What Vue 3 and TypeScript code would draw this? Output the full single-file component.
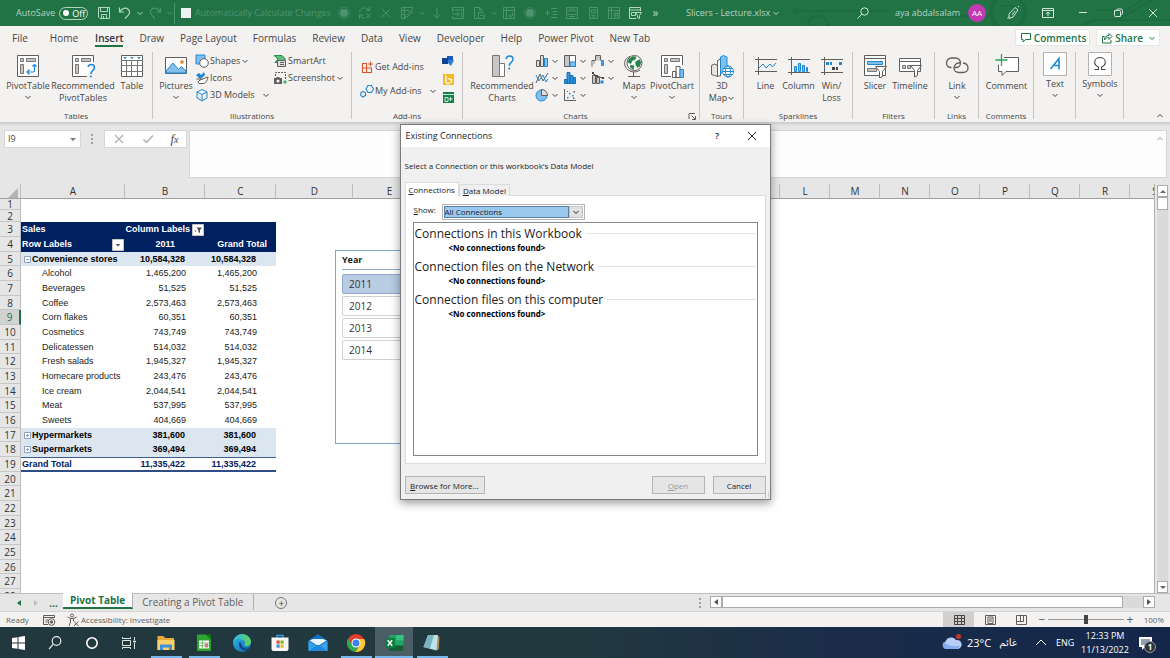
<script setup lang="ts">
import { h, ref } from 'vue'

interface IconProps { name: string; size?: number }
const Icon = (props: IconProps) => {
  const s = props.size ?? 14
  return h('svg', { width: s, height: s, viewBox: `0 0 ${s} ${s}`, 'aria-hidden': 'true' }, [h('use', { href: `#i-${props.name}` })])
}
Icon.props = ['name', 'size']

const qat = [
  { icon: 'dot', label: 'Record' }, { icon: 'refresh', label: 'Refresh' }, { icon: 'cross', label: 'Cancel' },
  { icon: 'edit', label: 'Edit', menu: true }, { icon: 'down', label: 'Drill down' }, { icon: 'import', label: 'Import' },
  { icon: 'paste', label: 'Paste', menu: true }, { icon: 'swap', label: 'Move' }, { icon: 'dot', label: 'Stop' },
  { icon: 'indent', label: 'Indent' }, { icon: 'rows', label: 'Rows' }, { icon: 'page', label: 'Page' },
  { icon: 'hash', label: 'Number' }, { icon: 'slicerq', label: 'Slicer', on: true },
]
const tabs = ['File', 'Home', 'Insert', 'Draw', 'Page Layout', 'Formulas', 'Review', 'Data', 'View', 'Developer', 'Help', 'Power Pivot', 'New Tab']

interface Big { icon: string; lines: string[]; menu?: boolean; inlineMenu?: boolean; cls: string }
const tables: Big[] = [
  { icon: 'pivot', lines: ['PivotTable'], menu: true, cls: 'w44' },
  { icon: 'recpivot', lines: ['Recommended', 'PivotTables'], cls: 'w66' },
  { icon: 'table', lines: ['Table'], cls: 'w32' },
]
const charts = ['column', 'tree', 'waterfall', 'line', 'histo', 'combo', 'pie', 'scatter']
const mapCharts: Big[] = [
  { icon: 'maps', lines: ['Maps'], menu: true, cls: 'w32' },
  { icon: 'pivotchart', lines: ['PivotChart'], menu: true, cls: 'w44' },
]
const tailGroups: { name: string; cls: string; items: Big[] }[] = [
  { name: 'Tours', cls: 'g-tours', items: [{ icon: 'map3d', lines: ['3D', 'Map'], inlineMenu: true, cls: 'w32' }] },
  { name: 'Sparklines', cls: 'g-spark', items: [
    { icon: 'spline', lines: ['Line'], cls: 'w32' }, { icon: 'spcol', lines: ['Column'], cls: 'w34' }, { icon: 'spwin', lines: ['Win/', 'Loss'], cls: 'w32' }] },
  { name: 'Filters', cls: 'g-filters', items: [
    { icon: 'slicer', lines: ['Slicer'], cls: 'w32' }, { icon: 'timeline', lines: ['Timeline'], cls: 'w38' }] },
  { name: 'Links', cls: 'g-links', items: [{ icon: 'link', lines: ['Link'], menu: true, cls: 'w38' }] },
  { name: 'Comments', cls: 'g-comments', items: [{ icon: 'comment', lines: ['Comment'], cls: 'w44' }] },
  { name: '', cls: 'g-text', items: [{ icon: 'text', lines: ['Text'], menu: true, cls: 'w38' }] },
  { name: '', cls: 'g-symbols', items: [{ icon: 'omega', lines: ['Symbols'], menu: true, cls: 'w38' }] },
]

const cols = 'ABCDEFGHIJKLMNOPQRS'.split('')
interface Row { n: number; kind: string; cells: string[] }
const data: Record<number, [string, string, string, string]> = {
  3: ['head', 'Sales', 'Column Labels', ''],
  4: ['head', 'Row Labels', '2011', 'Grand Total'],
  5: ['sub', 'Convenience stores', '10,584,328', '10,584,328'],
  6: ['item', 'Alcohol', '1,465,200', '1,465,200'],
  7: ['item', 'Beverages', '51,525', '51,525'],
  8: ['item', 'Coffee', '2,573,463', '2,573,463'],
  9: ['item', 'Corn flakes', '60,351', '60,351'],
  10: ['item', 'Cosmetics', '743,749', '743,749'],
  11: ['item', 'Delicatessen', '514,032', '514,032'],
  12: ['item', 'Fresh salads', '1,945,327', '1,945,327'],
  13: ['item', 'Homecare products', '243,476', '243,476'],
  14: ['item', 'Ice cream', '2,044,541', '2,044,541'],
  15: ['item', 'Meat', '537,995', '537,995'],
  16: ['item', 'Sweets', '404,669', '404,669'],
  17: ['sub', 'Hypermarkets', '381,600', '381,600'],
  18: ['sub', 'Supermarkets', '369,494', '369,494'],
  19: ['total', 'Grand Total', '11,335,422', '11,335,422'],
}
const rows: Row[] = Array.from({ length: 28 }, (_, i) => {
  const d = data[i + 1]
  return { n: i + 1, kind: d ? d[0] : 'blank', cells: d ? [d[1], d[2], d[3]] : ['', '', ''] }
})
const years = ['2011', '2012', '2013', '2014']
const year = ref('2011')
const show = ref('All Connections')
const zoom = ref(50)
const connectionGroups = ['Connections in this Workbook', 'Connection files on the Network', 'Connection files on this computer']
const apps = [
  { icon: 'win', label: 'Start', cls: 't-start' }, { icon: 'tsearch', label: 'Search', cls: 't-sys' },
  { icon: 'cortana', label: 'Cortana', cls: 't-sys' }, { icon: 'taskview', label: 'Task View', cls: 't-sys' },
  { icon: 'folder', label: 'File Explorer', cls: 't-app open' }, { icon: 'calc', label: 'Calc', cls: 't-app open' },
  { icon: 'edge', label: 'Edge', cls: 't-app' }, { icon: 'store', label: 'Store', cls: 't-app' },
  { icon: 'mail', label: 'Mail', cls: 't-app' }, { icon: 'chrome', label: 'Chrome', cls: 't-app open' },
  { icon: 'excel', label: 'Excel', cls: 't-app open current' }, { icon: 'notepad', label: 'Notepad', cls: 't-app open' },
]
</script>

<template>
  <div class="app">
    <svg class="sprite" aria-hidden="true">
      <defs>
        <linearGradient id="edgeg" x1="0" y1="0" x2="1" y2="1"><stop offset="0" stop-color="#35c1f1" /><stop offset="1" stop-color="#0c59a4" /></linearGradient>
        <linearGradient id="edgeh" x1="0" y1="0" x2="1" y2="0"><stop offset="0" stop-color="#2fb5e8" /><stop offset="1" stop-color="#5fd45a" /></linearGradient>
        <g id="i-chev" fill="none" stroke="currentColor" stroke-width="1"><path d="M1.500 3l2.500 2.500L6.500 3" /></g>
        <!-- quick access -->
        <g id="i-save" fill="none" stroke="currentColor"><path d="M1.500 1.500h11v11h-9.500l-1.500-1.500zM3.500 1.500v4h7v-4M4.500 12.500v-4h5v4M6.500 10v2" /></g>
        <g id="i-undo" fill="none" stroke="currentColor" stroke-width="1.200"><path d="M1.500 1.500v4.500h4.500M1.800 5.800C4 2 8 1.200 10.300 3.500c2.200 2.300 1.200 4.500-.5 6.200L7 12.500" /></g>
        <g id="i-redo" fill="none" stroke="currentColor" stroke-width="1.200"><path d="M12.500 1.500v4.500H8M12.200 5.800C10 2 6 1.200 3.700 3.500 1.500 5.800 2.500 8 4.200 9.700L7 12.500" /></g>
        <g id="i-dot"><circle cx="7" cy="7" r="5.500" fill="none" stroke="currentColor" opacity=".6" /><circle cx="7" cy="7" r="4" fill="currentColor" /></g>
        <g id="i-refresh" fill="none" stroke="currentColor"><path d="M1.500 6C2.500 2.500 6 1 9 2.500l2.500 2M11.500 1v3.500H8M1.500 12.500V9H5M1.800 9.300C3 11.500 5 12.500 7 12M8.500 7.500l4 4.500M12.500 7.500l-4 4.500" /></g>
        <g id="i-cross" fill="none" stroke="currentColor"><path d="M3 3l8 8M11 3l-8 8" /></g>
        <g id="i-edit" fill="none" stroke="currentColor"><path d="M12.500 3.500v-2h-11v11h4M1.500 4.500h8M4.500 1.500v11M1.500 8.500h3M12.500 5.500l-5 5-2 .8.800-2 5-5z" /></g>
        <g id="i-down" fill="none" stroke="currentColor"><path d="M7 2v10M3.500 8.500L7 12l3.500-3.500" /></g>
        <g id="i-import" fill="none" stroke="currentColor"><path d="M1.500 6V1.500h11v11h-11V10M1.500 4h11M1.500 8H8M5.500 5.500L8 8l-2.500 2.500M10.500 6v5" /></g>
        <g id="i-paste" fill="none" stroke="currentColor"><path d="M6 12.500H2.500v-11h5L10 4v2M7.500 1.500V4H10M6.500 6.500h4l2 2v4h-6zM8 9.500h3" /></g>
        <g id="i-swap" fill="none" stroke="currentColor"><path d="M1.500 1.500h11v11h-11zM1.500 4.500h11M4.500 1.500v11M7 10h3.500V6.500M8.500 8.300L7 10l1.500 1.500" /></g>
        <g id="i-indent" fill="none" stroke="currentColor"><path d="M7 2.500h6M8.500 5.500H13M8.500 8.500H13M7 11.500h6M1 7h5M3.500 4.500v5" /></g>
        <g id="i-rows" fill="none" stroke="currentColor"><path d="M1.500 1.500h11v11h-11zM1.500 5h11M1.500 8.500h11M4 3.200h6M4 10.500h6" /></g>
        <g id="i-page" fill="none" stroke="currentColor"><path d="M3.500 1.500h8v11h-8zM5.500 4h4v3h-4zM5.500 9.500h4M5.500 11h4" /></g>
        <g id="i-hash" fill="none" stroke="currentColor"><path d="M1.500 1.500h11v11h-11zM1.500 4.500h11M4.500 1.500v11M8 5.500v6M10.500 5.500v6M6.500 7.500h5.500M6.500 9.800h5.500" /></g>
        <g id="i-slicerq" fill="none" stroke="currentColor"><path d="M12.500 5v-3.500h-11v11h7M1.500 4h11M3.500 6.500h4v3h-4zM7.500 6.500h6l-2 3v3l-2-1v-2z" /></g>
        <g id="i-search" fill="none" stroke="currentColor"><circle cx="8.500" cy="5.500" r="3.700" /><path d="M5.800 8.300L1.500 12.500" /></g>
        <g id="i-pen" fill="none" stroke="currentColor"><path d="M3 8l6-6.500 3 2.500-5 7-4 1.500zM9 5l-3 4M1.500 12.500l1.500-2M12 1l1-1" /></g>
        <g id="i-ribbonopt" fill="none" stroke="currentColor"><path d="M1.500 2.500h11v9h-11zM1.500 4.500h11M7 10V6M5 8l2-2 2 2" /></g>
        <g id="i-min" fill="none" stroke="currentColor"><path d="M3 6.500h8" /></g>
        <g id="i-restore" fill="none" stroke="currentColor"><path d="M3.500 4.500h5q1 0 1 1v5h-5q-1 0-1-1zM5.500 4.500q0-1.500 1-1.500h3.500q1.500 0 1.500 1.500v3q0 1-2 1" /></g>
        <g id="i-bubble" fill="none" stroke="currentColor"><path d="M2.500 2.500h9v6h-5l-2.500 2.500v-2.500h-1.500z" /></g>
        <g id="i-share" fill="none" stroke="currentColor"><path d="M4.500 5.500h-2v6.500h8.500v-3M4.500 9c0-3 1.500-4.500 4.500-4.500V2.500l3 3-3 3V6.500C7 6.500 5.500 7 4.500 9z" /></g>
        <!-- large ribbon icons -->
        <g id="i-pivot"><path d="M1.500 1.500h21v21h-21z" fill="#fff" stroke="#605e5c" /><path d="M4.500 4.500h3v3h-3zM10.500 4.500h9v3h-9zM4.500 10.500h3v9h-3z" fill="#c8c6c4" stroke="#797775" /><path d="M18.500 10.500v6q0 1.500-1.500 1.500h-5.500M16.500 12.500l2-2 2 2M13.500 15.500L11 18l2.500 2.500" fill="none" stroke="#1e88d2" stroke-width="1.200" /></g>
        <g id="i-recpivot"><path d="M22.500 8V1.500h-21v21H16" fill="#fff" stroke="#605e5c" /><path d="M4.500 4.500h3v3h-3zM10.500 4.500h9v3h-9zM4.500 10.500h3v9h-3z" fill="#c8c6c4" stroke="#797775" /><path d="M17 13c.5-2 2-2.500 3.500-2.500s3 1 3 3c0 3-3.500 3-3.500 6.500" fill="none" stroke="#1e88d2" stroke-width="1.600" /><circle cx="20" cy="22.500" r="1.100" fill="#1e88d2" /></g>
        <g id="i-table"><path d="M1.500 1.500h21v21h-21z" fill="#fff" stroke="#605e5c" /><path d="M1.500 6.500h21M1.500 11.500h21M1.500 17.500h21M6.500 6.500v16M11.500 6.500v16M17.500 6.500v16" fill="none" stroke="#797775" /><path d="M3 3h4l-2 2zM10 3h4l-2 2zM17 3h4l-2 2z" fill="#1e88d2" /></g>
        <g id="i-pictures"><path d="M1.500 3.500h21v16h-21z" fill="#fff" stroke="#605e5c" /><path d="M2 17l7-8 5.500 6.500 3-3L22 17v2H2z" fill="#83beec" stroke="#1e88d2" /><circle cx="18" cy="8" r="1.700" fill="#e07b2a" /></g>
        <g id="i-reccharts"><path d="M2.500 1.500h7v21h-7z" fill="#c8c6c4" stroke="#797775" /><path d="M9.500 9.500h5v13h-5z" fill="#fff" stroke="#797775" /><path d="M16 5c.5-2 2-3 3.500-3s3.500 1 3.500 3.300c0 3.200-3.700 3-3.700 6.500" fill="none" stroke="#1e88d2" stroke-width="1.500" /><circle cx="19.300" cy="14.500" r="1.100" fill="#1e88d2" /></g>
        <g id="i-maps"><path d="M8 2.500C3 4 1.500 9 3.500 13c2.500 5 10 6.500 14.500 3" fill="none" stroke="#605e5c" /><circle cx="12.500" cy="9" r="7.500" fill="#fff" stroke="#605e5c" /><path d="M7 5l4-2.500 3 .5-1 2.500-3 1-1 3-3-1zM13.500 8l4-2.500 1.500 3-1.500 4-2 1-1.500-2.500zM8.500 11l3.500 1-.5 3.500-3-2z" fill="#1f8a4c" stroke="#156b39" stroke-width=".5" /><path d="M11.500 18v4M6 22.500h12" stroke="#605e5c" /></g>
        <g id="i-pivotchart"><path d="M22.500 11V1.500h-21v21H11" fill="#fff" stroke="#605e5c" /><path d="M4.500 4.500h3v3h-3zM10.500 4.500h9v3h-9zM4.500 10.500h3v9h-3z" fill="#c8c6c4" stroke="#797775" /><path d="M12.500 17.500h3.500v6h-3.500zM16 12.500h4v11h-4z" fill="#fff" stroke="#605e5c" /><path d="M20 15.500h3.500v8H20z" fill="#83beec" stroke="#1e88d2" /></g>
        <g id="i-map3d"><path d="M1.500 11.500l3-1.500 3 1.500v11l-3-1-3-1z" fill="#e8e6e4" stroke="#605e5c" /><path d="M7.500 6.500l3-1.500v17h-3z" fill="#fff" stroke="#605e5c" /><path d="M10.500 3l3-1.500 3.500 1.500v11l-6.500 6z" fill="#83beec" stroke="#1e88d2" /><circle cx="18" cy="17.500" r="5.500" fill="#fff" stroke="#1e88d2" /><ellipse cx="18" cy="17.500" rx="2.500" ry="5.500" fill="none" stroke="#1e88d2" /><path d="M12.500 17.500h11M13.500 14.500h9M13.500 20.500h9" stroke="#1e88d2" /></g>
        <g id="i-spline"><path d="M1 5.500h22M1 17.500h22M4.500 3v18" stroke="#605e5c" fill="none" /><path d="M5 14l4-4 3 4 4-4 2.500 3L22 9" fill="none" stroke="#1e88d2" /></g>
        <g id="i-spcol"><path d="M1 5.500h22M1 18.500h22M4.500 3v18" stroke="#605e5c" fill="none" /><path d="M7.500 12.500h2v5h-2zM11.500 9.500h2v8h-2zM15.500 11.500h2v6h-2zM19.500 13.500h1v4h-1z" fill="#83beec" stroke="#1e88d2" /></g>
        <g id="i-spwin"><path d="M1 5.500h22M1 18.500h22M4.500 3v18" stroke="#605e5c" fill="none" /><path d="M6 8h3v3H6zM10 8h2v3h-2zM19 8h3v3h-3z" fill="#1e88d2" /><path d="M12 13h3v3h-3zM16 13h2v3h-2z" fill="#444" /></g>
        <g id="i-slicer"><path d="M1.500 1.500h21v20h-21z" fill="#fff" stroke="#605e5c" /><path d="M1.500 4.500h21" stroke="#605e5c" /><path d="M4.500 7.500h15v3h-15z" fill="#83beec" stroke="#1e88d2" /><path d="M4.500 14.500h9v3h-9z" fill="#c8c6c4" stroke="#797775" /><path d="M12.500 12.500h11l-4 5v5l-3 1.500v-6.500z" fill="#fff" stroke="#605e5c" /></g>
        <g id="i-timeline"><path d="M1.500 4.500h21v13h-21z" fill="#fff" stroke="#605e5c" /><path d="M1.500 7.500h21" stroke="#605e5c" /><path d="M4.500 11.500h3v3h-3zM9.500 11.500h3v3h-3z" fill="#c8c6c4" stroke="#797775" /><path d="M12.500 11.500h11l-4 5v5l-3 1.500v-6.500z" fill="#fff" stroke="#605e5c" /></g>
        <g id="i-link" fill="none" stroke="#605e5c" stroke-width="1.300"><path d="M6.500 13.500C3 13.500 1.500 11.500 1.500 9S3.500 4 6.500 4h4C13.500 4 15.500 6.500 15.500 9s-2 4.500-4.500 4.500H9.500" /><path d="M18 9c3 .3 5 2.500 5 5s-2 4.500-5 4.500h-4c-3 0-5-2-5-4.500s2-5 4.500-5h2" /></g>
        <g id="i-comment"><path d="M9 3.500h14.500v14H11l-4 4v-4H3.500v-7" fill="#fff" stroke="#605e5c" /><path d="M6.500 0v12M.5 6h12" stroke="#2ba359" stroke-width="1.300" /></g>
        <g id="i-text"><path d="M.5.500h23v23H.5z" fill="#fff" stroke="#b3b0ad" /><path d="M7.500 17l8.500-10.500v11M10.500 13.500H16" fill="none" stroke="#1e88d2" stroke-width="1.600" /></g>
        <g id="i-omega"><path d="M.5.500h23v23H.5z" fill="#fff" stroke="#b3b0ad" /><path d="M6.500 17.500h4v-2.500c-2.500-1-3.800-2.500-3.800-4.800 0-2.800 2.300-4.700 5.300-4.700s5.300 1.900 5.300 4.700c0 2.300-1.300 3.800-3.800 4.800v2.500h4" fill="none" stroke="#484644" stroke-width="1.100" /></g>
        <!-- small ribbon icons -->
        <g id="i-shapes"><path d="M1 1h9v9H1z" fill="#83beec" stroke="#1e88d2" /><circle cx="9" cy="9" r="4.300" fill="#fff" stroke="#605e5c" /></g>
        <g id="i-icons"><path d="M1 4l3-2 2 2 3-3 1 3-2 2-3 2z" fill="#1e88d2" /><path d="M1.500 8h6M3 11l2-2 8-3q-1 6-5 6.500H4z" fill="#fff" stroke="#605e5c" /></g>
        <g id="i-models" fill="none" stroke="#1e88d2"><path d="M7 1.500l5 2.500v6l-5 3-5-3V4zM2 4l5 2.500L12 4M7 6.500V13" /></g>
        <g id="i-smartart"><path d="M1 1.500h8l3.500 3.500L9 8.500H2l3-3.500z" fill="#5fba7d" stroke="#2b8a4c" /><path d="M4.500 6.500h8v6h-8z" fill="#e1dfdd" stroke="#605e5c" /><path d="M7 8.500h4M7 10.500h4" stroke="#605e5c" /></g>
        <g id="i-screenshot"><path d="M2.500 5V1.500h10V8" fill="none" stroke="#605e5c" stroke-dasharray="2 1" /><path d="M1 7h2l1-1h2l1 1h2v6H1z" fill="#605e5c" /><circle cx="5" cy="10" r="1.500" fill="#fff" /><path d="M12 9v4M10 11h4" stroke="#2ba359" /></g>
        <g id="i-getadd" fill="none" stroke="#d8542b" stroke-width="1.100"><path d="M2.500 3.500h4v9h-4zM2.500 8h9v4.500h-5M10.500 1.500v5M8 4h5" /></g>
        <g id="i-myadd" fill="none" stroke="#1e88d2" stroke-width="1.100"><path d="M8 1.500h3.500l2 3.500-2 3.500H8L6 5zM3 7.500l2.500 1.300v2.700L3 13 .8 11.500V8.800z" /></g>
        <g id="i-visio"><path d="M6 2h6v5H6z" fill="#1b5bb5" /><path d="M1 4h6v6H1z" fill="#0f4396" /><path d="M7 6h6l-3 6-3-3z" fill="#2f7bd8" /></g>
        <g id="i-bing"><path d="M2 2h11v11H2z" fill="#f7b924" /><path d="M5 3.500v7l2 1.200 3.500-2V7.800L7 6.500" fill="none" stroke="#fff" stroke-width="1.300" /></g>
        <g id="i-people"><path d="M2 2h11v11H2z" fill="#15804a" /><path d="M2 4.500h11M4 7.500h3v4H4zM9.500 7v4M7.500 9h4" stroke="#cdebd9" fill="none" /></g>
        <g id="i-column"><path d="M1.500 6.500h3v6h-3zM5.500 1.500h3v11h-3z" fill="#e1dfdd" stroke="#605e5c" /><path d="M9.500 4.500h3v8h-3z" fill="#83beec" stroke="#1e88d2" /></g>
        <g id="i-tree"><path d="M1.500 1.500h11v11h-11z" fill="#fff" stroke="#605e5c" /><path d="M2 2h4.500v10H2z" fill="#c8c6c4" /><path d="M6.500 1.500v11" stroke="#605e5c" /><path d="M7 8h5.500v4.500H7z" fill="#83beec" stroke="#1e88d2" /></g>
        <g id="i-waterfall"><path d="M1 12.500V6.500h3.500V1.500h5v5" fill="none" stroke="#605e5c" /><path d="M5 2h4v4.500H5zM1.500 7H4v3H1.500z" fill="#c8c6c4" /><path d="M10 6h3v6h-3z" fill="#3a96dd" /></g>
        <g id="i-line"><path d="M1 12l4-9 3 7 5-8" fill="none" stroke="#605e5c" /><path d="M1 4l3 6 4-6 3 7 2-3" fill="none" stroke="#1e88d2" /></g>
        <g id="i-histo"><path d="M1.500 8.500h2.500v4H1.500zM4 1.500h3v11H4zM7 4.500h3v8H7zM10 6.500h2.500v6H10z" fill="#3a96dd" stroke="#1570b8" /></g>
        <g id="i-combo"><path d="M1.500 4.500h3v8h-3zM5.500 6.500h3v6h-3z" fill="#c8c6c4" stroke="#605e5c" /><path d="M9.500 9.500h3v3h-3z" fill="#1e88d2" /><path d="M1 2l5 3 6.500 2.500" fill="none" stroke="#484644" /><path d="M1 1h2v2H1zM5 4h2v2H5zM11 6h2v2h-2z" fill="#484644" /></g>
        <g id="i-pie"><circle cx="6.500" cy="7.500" r="5.500" fill="#83beec" stroke="#1e88d2" /><path d="M6.500 7.500V1.500a6 6 0 0 1 6 6z" fill="#e1dfdd" stroke="#605e5c" /></g>
        <g id="i-scatter"><path d="M1.500 1v11.500H13" fill="none" stroke="#605e5c" /><path d="M4 9h1.500v1.500H4zM6 5h1.500v1.500H6zM9 7h1.500v1.500H9z" fill="#1e88d2" /><path d="M10.500 3H12v1.500h-1.500zM10 9.500h1.500V11H10zM4 3h1v1H4z" fill="#605e5c" /></g>
        <g id="i-launch" fill="none" stroke="#605e5c"><path d="M1 7V1.500h6M3.500 3.500L7 7M7.500 4v3.500H4" /></g>
        <!-- sheet and status -->
        <g id="i-fcross" fill="none" stroke="#b3b0ad" stroke-width="1.200"><path d="M3 3l8 8M11 3l-8 8" /></g>
        <g id="i-fcheck" fill="none" stroke="#b3b0ad" stroke-width="1.500"><path d="M2.500 7.500L5.500 10.500 12 3.500" /></g>
        <g id="i-filter"><path d="M.5.500h11v11h-11z" fill="#fff" stroke="#c8c6c4" /><path d="M4.500 3.500h5.500L8 6v3L6.500 8V6z" fill="#444" /><path d="M2.500 6.500h2l-1 1.500z" fill="#444" /></g>
        <g id="i-drop"><path d="M.5.500h11v11h-11z" fill="#fff" stroke="#c8c6c4" /><path d="M3.500 5h5L6 7.500z" fill="#555" /></g>
        <g id="i-minus" fill="#fff" stroke="#8aa4c4"><path d="M.5.500h6v6h-6zM2 3.500h3" /></g>
        <g id="i-plus" fill="#fff" stroke="#8aa4c4"><path d="M.5.500h6v6h-6zM2 3.500h3M3.500 2v3" /></g>
        <g id="i-macro" fill="none" stroke="#605e5c"><path d="M12.500 5V2.500h-11v9H6M1.500 4.500h11M3.500 7h3M3.500 9h2" /><circle cx="9.500" cy="9" r="3.300" /><circle cx="9.500" cy="9" r="1.200" fill="#605e5c" /></g>
        <g id="i-access" fill="none" stroke="#605e5c"><circle cx="6" cy="2.500" r="1.500" /><path d="M1.500 4l3 1.500h3l3-1.500M4.500 5.500V9L3 13M7.500 5.500v2.500M8 8.500l4.500 4.500M12.500 8.500L8 13" /></g>
        <g id="i-vnormal" fill="none" stroke="#484644"><path d="M2.500 2.500h10v9h-10zM2.500 5.500h10M2.500 8.500h10M5.500 2.500v9M9.500 2.500v9" /></g>
        <g id="i-vpage" fill="none" stroke="#605e5c"><path d="M2.500 2.500h10v9h-10zM5 4h5v6.500H5zM6 6h3M6 8h3" /></g>
        <g id="i-vbreak" fill="none" stroke="#605e5c"><path d="M2.500 2.500h10v9h-10zM2.500 8.500h7v-6M6.500 2.500v6" /></g>
        <!-- taskbar -->
        <g id="i-win" fill="#fff"><path d="M4 5l5.500-.8V9.500H4zM10.500 4l6.500-1v6.500h-6.500zM4 10.500h5.500v5.300L4 15zM10.500 10.500H17V17l-6.500-1z" /></g>
        <g id="i-tsearch" fill="none" stroke="#e6eaec" stroke-width="1.200"><circle cx="11.500" cy="8" r="4.300" /><path d="M8.300 11.200L4 16" /></g>
        <g id="i-cortana"><circle cx="10" cy="10" r="5.200" fill="none" stroke="#fff" stroke-width="1.600" /></g>
        <g id="i-taskview" fill="none" stroke="#dfe4e6"><path d="M3.500 4v1.500h8V4M3.500 7.500h8v5h-8zM3.500 16v-1.500h8V16M15.500 4v3M15.500 10v6" /><path d="M14.500 8h2v1h-2z" fill="#fff" /></g>
        <g id="i-folder"><path d="M1.500 3h6l1.500 2h9v12h-16.500z" fill="#e8a93a" /><path d="M1.500 7h17v10h-17z" fill="#fbd06b" /><path d="M4 17v-5.500h12V17h-3v-2.500H7V17z" fill="#3f8fd6" /></g>
        <g id="i-calc"><path d="M3 1.500h9l5 5V18H3z" fill="#2ea52e" /><path d="M12 1.500l5 5v-5z" fill="#0d7a12" /><path d="M5 7.500h10v8H5z" fill="#fff" /><path d="M5 10h10M5 12.700h10M8.300 7.500v8" stroke="#6dbb6d" /><path d="M11 10.500h3v4h-3z" fill="#d77" /></g>
        <g id="i-edge"><circle cx="10" cy="10" r="9" fill="url(#edgeg)" /><path d="M1.500 8C3 2.500 8 .5 12 1.200c4.500.8 7 4.300 7 7.800 0 3-2.500 4.500-5 4.300-1.500-.2-2-.8-1.500-1.500C14 9 11.500 6 8 6S2.500 7 1.500 8z" fill="url(#edgeh)" /><path d="M8 8.500c-2 3-.5 7.500 4 8.500 2 .4 4-.4 5-1.500-3 .8-7-.5-7.500-3.500z" fill="#123f86" /></g>
        <g id="i-store"><path d="M7 5V2.500h6V5" fill="none" stroke="#3ba0e6" stroke-width="1.300" /><path d="M1.500 4.500h17V16q0 2-2 2h-13q-2 0-2-2z" fill="#f6f6f6" /><path d="M6.500 7.500h3.200v3.200H6.500z" fill="#e0502c" /><path d="M10.500 7.500h3.200v3.200h-3.200z" fill="#7cb928" /><path d="M6.500 11.500h3.200v3.200H6.500z" fill="#2b94df" /><path d="M10.500 11.500h3.200v3.200h-3.200z" fill="#f3b41b" /></g>
        <g id="i-mail"><path d="M.5 7.500L10 1l9.500 6.500V18H.5z" fill="#1470c4" /><path d="M1.500 7.500L5 6h10l3.500 1.500L10 13z" fill="#e9f3fb" /><path d="M.5 18V8l9.500 6 9.500-6v10z" fill="#35a4ea" /><path d="M.5 18l9.500-6.500L19.500 18z" fill="#1d8adb" /></g>
        <g id="i-chrome"><circle cx="10" cy="10" r="9" fill="#e33b2e" /><path d="M2.200 5.500a9 9 0 0 0 7.300 13.500L14 11.500 6 12z" fill="#2da94f" /><path d="M18.200 6H10l4 6-4.500 7A9 9 0 0 0 18.200 6z" fill="#fcc934" /><circle cx="10" cy="10" r="4.500" fill="#fff" /><circle cx="10" cy="10" r="3.500" fill="#3f82ee" /></g>
        <g id="i-excel"><path d="M5 2h14.500v16H5z" fill="#21a366" /><path d="M12 2h7.500v5.300H12z" fill="#33c481" /><path d="M5 12.500h14.500V18H5z" fill="#185c37" /><path d="M1 5h10v10H1z" fill="#107c41" /><path d="M3.700 7.300l4.500 5.500M8.200 7.300l-4.500 5.500" stroke="#fff" stroke-width="1.400" /></g>
        <g id="i-notepad"><path d="M7 2.500l10.500 1L17 16l-3 1.500z" fill="#a8875a" /><path d="M6 2h10l-1.500 15.500L1.500 14z" fill="#bfe2e8" /><path d="M6 2h6l-4 13.500L1.500 14z" fill="#78b4c0" /></g>
        <g id="i-weather"><circle cx="16.500" cy="3.500" r="2.500" fill="#c8382c" /><path d="M4 16a4 4 0 0 1-.5-7.500A6 6 0 0 1 14 7a4.500 4.500 0 0 1 2 9z" fill="#b5cdf7" /><path d="M4 16a4 4 0 0 1-2-7q4 5 15.500 4-1 3-3.500 3z" fill="#86abf0" /></g>
        <g id="i-notify"><path d="M2 3h13v10H8l-3 3v-3H2z" fill="#fff" /><path d="M4 6h9M4 8h9M4 10h5" stroke="#28406b" /></g>
        <g id="i-trayup" fill="none" stroke="#fff"><path d="M2 9l5-5 5 5" /></g>
      </defs>
    </svg>

    <header class="titlebar">
      <svg class="circuit" viewBox="0 0 390 26" preserveAspectRatio="xMaxYMid slice" aria-hidden="true">
        <g fill="none" stroke="#1e6b40" stroke-width="2"><circle cx="16" cy="11" r="2" /><path d="M19 11h90M150 16h60" /><circle cx="38" cy="26" r="10" /><circle cx="228" cy="12" r="17" stroke-width="3" /><path d="M220 6h14l-8 14M300 26l14-6h76M318 10h28l24-14M336 20l40-22" /></g>
      </svg>
      <label class="autosave">AutoSave
        <button class="toggle" type="button" role="switch" aria-checked="false"><i></i>Off</button>
      </label>
      <div class="qat">
        <button class="q on" aria-label="Save"><Icon name="save" /></button>
        <button class="q on" aria-label="Undo"><Icon name="undo" /></button>
        <button class="qc on" aria-label="Undo list"><Icon name="chev" :size="8" /></button>
        <button class="q" aria-label="Redo"><Icon name="redo" /></button>
        <button class="qc" aria-label="Redo list"><Icon name="chev" :size="8" /></button>
        <label class="autocalc"><input type="checkbox" disabled>Automatically Calculate Changes</label>
        <template v-for="(q, i) in qat" :key="i">
          <button class="q" :class="{ on: q.on }" :aria-label="q.label"><Icon :name="q.icon" /></button>
          <button v-if="q.menu" class="qc" :aria-label="q.label + ' options'"><Icon name="chev" :size="8" /></button>
        </template>
        <button class="q on more" aria-label="More commands">»</button>
      </div>
      <button class="doc">Slicers - Lecture.xlsx <Icon name="chev" :size="8" /></button>
      <div class="account">
        <button class="wbtn" aria-label="Search"><Icon name="search" /></button>
        <span class="user">aya abdalsalam</span><span class="avatar">AA</span>
        <button class="wbtn" aria-label="Coming soon"><Icon name="pen" /></button>
        <button class="wbtn" aria-label="Ribbon display options"><Icon name="ribbonopt" /></button>
        <button class="wbtn" aria-label="Minimize"><Icon name="min" /></button>
        <button class="wbtn" aria-label="Restore"><Icon name="restore" /></button>
        <button class="wbtn" aria-label="Close window"><Icon name="cross" /></button>
      </div>
    </header>

    <nav class="tabs">
      <button v-for="t in tabs" :key="t" class="tab" :class="{ active: t === 'Insert' }">{{ t }}</button>
      <div class="right">
        <button class="pill"><Icon name="bubble" />Comments</button>
        <button class="pill"><Icon name="share" />Share<Icon class="pc" name="chev" :size="8" /></button>
      </div>
    </nav>

    <section class="ribbon">
      <div class="group g-tables">
        <div class="gbody">
          <button v-for="b in tables" :key="b.icon" class="big" :class="b.cls">
            <Icon :name="b.icon" :size="24" /><span v-for="l in b.lines" :key="l">{{ l }}</span><Icon v-if="b.menu" name="chev" :size="8" />
          </button>
        </div>
        <div class="gname">Tables</div>
      </div>
      <div class="group g-illus">
        <div class="gbody">
          <button class="big w40"><Icon name="pictures" :size="24" /><span>Pictures</span><Icon name="chev" :size="8" /></button>
          <div class="stack s1">
            <button class="small"><Icon name="shapes" />Shapes<Icon name="chev" :size="8" /></button>
            <button class="small"><Icon name="icons" />Icons</button>
            <button class="small split"><Icon name="models" />3D Models<Icon name="chev" :size="8" /></button>
          </div>
          <div class="stack">
            <button class="small"><Icon name="smartart" />SmartArt</button>
            <button class="small"><Icon name="screenshot" />Screenshot<Icon name="chev" :size="8" /></button>
          </div>
        </div>
        <div class="gname">Illustrations</div>
      </div>
      <div class="group g-addins">
        <div class="gbody">
          <div class="stack wide">
            <button class="small"><Icon name="getadd" />Get Add-ins</button>
            <button class="small split"><Icon name="myadd" />My Add-ins<Icon name="chev" :size="8" /></button>
          </div>
          <div class="stack">
            <button class="small" aria-label="Visio"><Icon name="visio" /></button>
            <button class="small" aria-label="Bing Maps"><Icon name="bing" /></button>
            <button class="small" aria-label="People Graph"><Icon name="people" /></button>
          </div>
        </div>
        <div class="gname">Add-ins</div>
      </div>
      <div class="group g-charts">
        <div class="gbody">
          <button class="big w66"><Icon name="reccharts" :size="24" /><span>Recommended</span><span>Charts</span></button>
          <div class="chartgrid">
            <button v-for="c in charts" :key="c" class="small" :aria-label="c + ' chart'"><Icon :name="c" /><Icon name="chev" :size="8" /></button>
          </div>
          <button v-for="b in mapCharts" :key="b.icon" class="big" :class="b.cls">
            <Icon :name="b.icon" :size="24" /><span v-for="l in b.lines" :key="l">{{ l }}</span><Icon v-if="b.menu" name="chev" :size="8" />
          </button>
        </div>
        <div class="gname launched"><span>Charts</span><button aria-label="See all charts"><Icon name="launch" :size="8" /></button></div>
      </div>
      <div v-for="g in tailGroups" :key="g.cls" class="group" :class="g.cls">
        <div class="gbody center">
          <button v-for="b in g.items" :key="b.icon" class="big" :class="b.cls">
            <Icon :name="b.icon" :size="24" />
            <span v-for="(l, i) in b.lines" :key="l">{{ l }}<Icon v-if="b.inlineMenu && i === 1" name="chev" :size="8" /></span>
            <Icon v-if="b.menu" name="chev" :size="8" />
          </button>
        </div>
        <div class="gname">{{ g.name }}</div>
      </div>
      <button class="collapse" aria-label="Collapse the ribbon"><Icon class="flip" name="chev" :size="8" /></button>
    </section>

    <section class="formula">
      <div class="namebox"><input value="I9" aria-label="Name box"><i class="tri"></i></div>
      <i class="dots"></i>
      <div class="fxbox">
        <button aria-label="Cancel entry"><Icon name="fcross" /></button>
        <button aria-label="Enter"><Icon name="fcheck" /></button>
        <button class="fx" aria-label="Insert function">f<sub>x</sub></button>
      </div>
      <div class="fbar"><textarea aria-label="Formula bar"></textarea><Icon class="flip" name="chev" :size="8" /></div>
    </section>

    <main class="sheet">
      <div class="grid">
        <table>
          <colgroup><col class="c-row"><col v-for="c in cols" :key="c" :class="'c-' + c"></colgroup>
          <thead><tr><th class="corner"><i></i></th><th v-for="c in cols" :key="c">{{ c }}</th></tr></thead>
          <tbody>
            <tr v-for="r in rows" :key="r.n" :class="[r.kind, 'r' + r.n]">
              <th>{{ r.n }}</th>
              <td class="name">
                <div v-if="r.cells[0]">
                  <Icon v-if="r.n === 5" name="minus" :size="7" /><Icon v-else-if="r.kind === 'sub'" name="plus" :size="7" />
                  <span>{{ r.cells[0] }}</span>
                  <button v-if="r.n === 4" aria-label="Row label filter"><Icon name="drop" :size="12" /></button>
                </div>
              </td>
              <td class="num"><div>{{ r.cells[1] }}<button v-if="r.n === 3" aria-label="Column label filter"><Icon name="filter" :size="12" /></button></div></td>
              <td class="num">{{ r.cells[2] }}</td>
              <td :colspan="cols.length - 3"></td>
            </tr>
          </tbody>
        </table>
        <div class="slicer">
          <h2>Year</h2>
          <button v-for="y in years" :key="y" :class="{ picked: y === year }" @click="year = y">{{ y }}</button>
        </div>
      </div>
      <div class="vscroll"><button aria-label="Scroll up"><i class="up"></i></button><div class="thumb"></div><div class="track"></div><button aria-label="Scroll down"><i class="dn"></i></button></div>
    </main>

    <footer class="sheettabs">
      <button class="nav first" aria-label="Previous sheet"><i class="lf green"></i></button><button class="nav" aria-label="Next sheet"><i class="rt pale"></i></button><button class="nav ell">…</button>
      <button class="stab active">Pivot Table</button><button class="stab">Creating a Pivot Table</button>
      <button class="add" aria-label="New sheet">+</button>
      <i class="dots"></i>
      <div class="hscroll"><button aria-label="Scroll left"><i class="lf"></i></button><div class="thumb"></div><div class="track"></div><button aria-label="Scroll right"><i class="rt"></i></button></div>
    </footer>

    <footer class="status">
      <span class="ready">Ready</span><Icon name="macro" /><span class="acc"><Icon name="access" />Accessibility: Investigate</span>
      <button class="view sel" aria-label="Normal"><Icon name="vnormal" /></button>
      <button class="view" aria-label="Page layout"><Icon name="vpage" /></button>
      <button class="view" aria-label="Page break preview"><Icon name="vbreak" /></button>
      <button class="zb">−</button><input v-model="zoom" type="range" min="0" max="100" aria-label="Zoom"><button class="zb">+</button>
      <span class="pct">100%</span>
    </footer>

    <footer class="taskbar">
      <button v-for="a in apps" :key="a.icon" :class="a.cls" :aria-label="a.label"><Icon :name="a.icon" :size="20" /></button>
      <div class="tray">
        <Icon name="weather" :size="20" /><span class="temp">23°C</span><span class="cond" dir="rtl" lang="ar">غائم</span>
        <Icon class="upi" name="trayup" /><span class="lang">ENG</span>
        <div class="clock"><span>12:33 PM</span><span>11/13/2022</span></div>
        <button class="note" aria-label="Notifications"><Icon name="notify" :size="18" /><b>1</b></button>
      </div>
    </footer>

    <div class="overlay">
      <div class="dialog" role="dialog" aria-labelledby="dlg-title">
        <div class="dtitle"><span id="dlg-title">Existing Connections</span><button aria-label="Help">?</button><button aria-label="Close"><Icon name="cross" /></button></div>
        <div class="dbody">
          <p>Select a Connection or this workbook's Data Model</p>
          <div class="dtabs"><button class="active"><u>C</u>onnections</button><button><u>D</u>ata Model</button></div>
          <div class="panel">
            <div class="showrow">
              <label for="show"><u>S</u>how:</label>
              <div class="combo"><select id="show" v-model="show"><option>All Connections</option></select><span><Icon name="chev" :size="8" /></span></div>
            </div>
            <div class="list">
              <template v-for="g in connectionGroups" :key="g"><h3>{{ g }}</h3><p>&lt;No connections found&gt;</p></template>
            </div>
          </div>
          <div class="actions">
            <button class="browse"><u>B</u>rowse for More...</button>
            <button disabled><u>O</u>pen</button><button>Cancel</button>
          </div>
          <i class="grip"></i>
        </div>
      </div>
    </div>
  </div>
</template>

<style>
html, body, #app { height: 100%; }
body { margin: 0; overflow: hidden; }
</style>

<style scoped>
.app { position: relative; display: flex; flex-direction: column; height: 100%; font: 9px/12px "Open Sans", "Noto Sans", sans-serif; color: #484644; background: #e6e6e6; overflow: hidden; }
.app * { box-sizing: border-box; }
.sprite { position: absolute; width: 0; height: 0; }
svg { flex: none; display: block; }
button, input, select, textarea { font: inherit; color: inherit; background: none; border: 0; padding: 0; margin: 0; border-radius: 0; outline: 0; }
button { white-space: nowrap; }
.flip { transform: rotate(180deg); }

.titlebar { position: relative; flex: none; height: 26px; display: flex; align-items: center; background: #217346; color: #b5d5c3; padding-left: 16px; }
.circuit { position: absolute; right: 0; top: 0; width: 390px; height: 26px; overflow: hidden; }
.autosave { display: flex; align-items: center; width: 77px; gap: 4px; }
.toggle { display: flex; align-items: center; gap: 3px; width: 29px; height: 13px; border: 1px solid #b5d5c3; border-radius: 7px; padding-left: 3px; line-height: 11px; color: #fff; }
.toggle i { width: 6px; height: 6px; border-radius: 3px; background: #fff; }
.qat { display: flex; align-items: center; color: #4d9370; }
.q { width: 21px; display: flex; justify-content: center; }
.qc { width: 9px; display: flex; justify-content: center; }
.on { color: #b5d5c3; }
.more { font-size: 12px; }
.autocalc { display: flex; align-items: center; gap: 4px; width: 159px; height: 21px; padding-left: 6px; border-left: 1px solid #4d9370; white-space: nowrap; }
.autocalc input { appearance: none; flex: none; width: 10px; height: 10px; background: #eef3ef; }
.doc { position: relative; display: flex; align-items: center; gap: 2px; margin-left: 20px; }
.account { position: relative; margin-left: auto; display: flex; align-items: center; color: #d4e6dc; }
.wbtn { width: 35px; display: flex; justify-content: center; }
.user { margin-left: 14px; color: #b5d5c3; }
.avatar { width: 18px; height: 18px; border-radius: 9px; background: #c239b3; color: #fff; font-size: 8px; text-align: center; line-height: 18px; margin: 0 9px 0 8px; }

.tabs { flex: none; display: flex; height: 24px; background: #f3f2f1; padding-left: 12px; gap: 16px; font-size: 10px; }
.tab { height: 21px; line-height: 24px; }
.tab:first-child { margin-right: 6px; }
.tab.active { font-weight: 600; color: #333; border-bottom: 2px solid #217346; margin-left: 1px; }
.right { margin-left: auto; display: flex; gap: 6px; padding: 3px 10px 0 0; }
.pill { display: flex; align-items: center; gap: 1px; height: 17px; padding: 0 3px; background: #fff; border: 1px solid #e8e6e4; color: #217346; font-weight: 600; }
.pc { margin-left: 4px; }

.ribbon { flex: none; display: flex; height: 72px; background: #f3f2f1; padding-top: 2px; }
.group { flex: none; display: flex; flex-direction: column; justify-content: space-between; height: 67px; border-right: 1px solid #c8c6c4; }
.g-tables { width: 153px; } .g-illus { width: 199px; } .g-addins { width: 111px; } .g-charts { width: 237px; }
.g-tours { width: 44px; } .g-spark { width: 109px; } .g-filters { width: 82px; } .g-links { width: 44px; }
.g-comments { width: 55px; } .g-text { width: 42px; } .g-symbols { width: 48px; }
.gbody { display: flex; height: 56px; }
.center { justify-content: center; padding-left: 1px; }
.g-tables .gbody { padding-left: 6px; } .g-illus .gbody { padding-left: 3px; } .g-addins .gbody { padding-left: 8px; } .g-charts .gbody { padding-left: 6px; }
.gname { height: 12px; font-size: 8px; text-align: center; margin-bottom: -3px; }
.launched { display: flex; align-items: center; }
.launched span { flex: 1; }
.launched button { width: 11px; }
.big { display: flex; flex-direction: column; align-items: center; flex: none; padding-top: 2px; }
.big > span { display: flex; align-items: center; }
.big > svg:first-child { margin-bottom: 2px; }
.big > svg:last-child { margin-top: 1px; }
.g-text .big, .g-symbols .big { padding-top: 0; }
.w32 { width: 32px; } .w34 { width: 34px; } .w38 { width: 38px; } .w40 { width: 40px; } .w44 { width: 44px; } .w66 { width: 66px; }
.stack { display: flex; flex-direction: column; }
.s1 { width: 78px; margin-left: -1px; }
.small { display: flex; align-items: center; gap: 1px; height: 18px; }
.g-illus .small, .chartgrid .small { height: 17px; }
.split > svg:last-child { margin-left: 6px; }
.wide { width: 81px; padding-top: 3px; }
.wide .small { height: 24px; gap: 1px; }
.chartgrid { display: grid; grid-template-columns: repeat(3, 28px); align-content: start; gap: 0; }
.chartgrid .small { gap: 2px; }
.chartgrid + .big { margin-left: -1px; }
.collapse { margin-left: auto; align-self: flex-end; padding: 0 6px 2px 0; }

.formula { flex: none; display: flex; align-items: flex-start; height: 62px; padding: 8px 3px 0 4px; background: linear-gradient(#c9c9c9, #e6e6e6 4px); }
.namebox { display: flex; align-items: center; width: 77px; height: 18px; background: #fff; border: 1px solid #d6d6d6; padding: 0 4px 0 3px; }
.namebox input { flex: 1; min-width: 0; }
.tri { border: 3px solid transparent; border-top-color: #777; border-bottom: 0; }
.dots { width: 2px; height: 10px; margin: 4px 11px 0 10px; background: repeating-linear-gradient(#a0a0a0 0 2px, transparent 2px 4px); }
.fxbox { display: flex; align-items: center; justify-content: space-around; width: 83px; height: 18px; background: #fff; border: 1px solid #d6d6d6; }
.fx { font: italic 400 13px/14px "Liberation Serif", serif; }
.fx sub { font-size: 10px; vertical-align: baseline; }
.fbar { flex: 1; display: flex; height: 48px; margin-left: 2px; background: #fdfdfd; border: 1px solid #d6d6d6; padding: 4px 2px; color: #999; }
.fbar textarea { flex: 1; resize: none; }

.sheet { flex: 1; min-height: 0; display: flex; }
.grid { position: relative; flex: 1; min-width: 0; overflow: hidden; background: #fff; border-right: 1px solid #b0b0b0; }
table { table-layout: fixed; width: 1180px; border-collapse: separate; border-spacing: 0; font: 9px/11px "Liberation Sans", Arial, sans-serif; color: #222; }
.c-row { width: 21px; } .c-A { width: 104px; } .c-B { width: 80px; } .c-C { width: 71px; } .c-D { width: 77px; } .c-E { width: 73px; }
.c-F, .c-G, .c-H, .c-I, .c-J, .c-K { width: 59px; }
.c-L, .c-M, .c-N, .c-O, .c-P, .c-Q, .c-R, .c-S { width: 50px; }
th, td { padding: 0; white-space: nowrap; }
th { font: 10px/13px "Open Sans", "Noto Sans", sans-serif; color: #333; background: #e6e6e6; border-right: 1px solid #bdbdbd; border-bottom: 1px solid #c6c6c6; }
thead th { height: 15px; line-height: 14px; padding-left: 1px; border-bottom-color: #9f9f9f; }
.corner i { display: block; margin: 3px 2px 0 auto; width: 0; border: 5px solid transparent; border-right-color: #b4b4b4; border-bottom-color: #b4b4b4; }
tbody tr { height: 15px; }
tbody tr:nth-child(3n + 2) { height: 14px; }
tbody tr.r1 { height: 11px; }
tbody tr.r2 { height: 12px; }
tbody th { line-height: 10px; }
.r9 th { background: #d2d2d2; color: #217346; border-right: 2px solid #217346; }
td { vertical-align: middle; }
.name div { display: flex; align-items: center; gap: 1px; padding: 0 1px; }
.name button { margin-left: auto; }
.num { text-align: right; padding-right: 19px; }
.num div { display: flex; justify-content: flex-end; align-items: center; gap: 2px; }
.sub td:nth-child(-n + 4) { background: #dce6f1; font-weight: 700; color: #000; }
.head td:nth-child(-n + 4) { background: #002060; font-weight: 700; color: #fff; }
.sub .num, .total .num { padding-right: 20px; }
.sub .name div { padding-left: 3px; }
.item .name { padding-left: 20px; }
.r3 .num { padding-right: 0; }
.r3 .num:nth-child(3) { padding-right: 1px; }
.r4 .num:nth-child(3) { padding-right: 30px; }
.r4 .num:nth-child(4) { padding-right: 9px; }
.total td:nth-child(-n + 4) { font-weight: 700; color: #002060; border-top: 1px solid #3f5f93; border-bottom: 2px solid #2f4d85; }

.slicer { position: absolute; left: 335px; top: 66px; width: 140px; height: 194px; padding: 3px 6px; background: #fff; border: 1px solid #7ea6c9; }
.slicer h2 { margin: 0 0 4px; font-size: 9px; line-height: 12px; font-weight: 700; color: #222; padding-bottom: 3px; border-bottom: 1px solid #8ea9c9; }
.slicer button { display: block; width: 100%; height: 20px; margin-bottom: 2px; padding-left: 6px; text-align: left; font-size: 10px; color: #333; border: 1px solid #d0d0d0; border-radius: 2px; }
.slicer .picked { background: #b8cce4; border-color: #8ea9c9; }

.vscroll { flex: none; display: flex; flex-direction: column; width: 15px; padding: 1px 2px 0 2px; }
.vscroll button, .hscroll button { flex: none; display: flex; align-items: center; justify-content: center; background: #fff; border: 1px solid #ababab; }
.vscroll button { height: 12px; }
.vscroll .thumb { height: 13px; background: #fff; border: 1px solid #ababab; }
.vscroll .track { flex: 1; background: #dadada; }
.up, .dn, .lf, .rt { width: 0; height: 0; border: 3px solid transparent; }
.up { border-bottom-color: #666; border-top: 0; } .dn { border-top-color: #666; border-bottom: 0; }
.lf { border-right: 4px solid #555; border-left: 0; } .rt { border-left: 4px solid #555; border-right: 0; }
.green { border-right-color: #217346; } .pale { border-left-color: #c0c0c0; }

.sheettabs { flex: none; display: flex; height: 19px; border-top: 1px solid #c0c0c0; border-bottom: 1px solid #d4d4d4; font-size: 10px; }
.nav { width: 17px; height: 17px; display: flex; align-items: center; justify-content: center; }
.first { margin-left: 10px; }
.ell { width: 19px; color: #217346; font-weight: 700; line-height: 10px; }
.stab { height: 16px; padding: 0 10px 0 9px; line-height: 13px; color: #605e5c; border-right: 1px solid #b0b0b0; }
.stab.active { margin-top: -1px; padding: 0 7px; line-height: 15px; background: #fff; color: #217346; font-weight: 700; border-bottom: 2px solid #217346; }
.add { width: 12px; height: 12px; margin: 3px 0 0 21px; border: 1px solid #777; border-radius: 6px; line-height: 9px; }
.sheettabs .dots { margin: 4px 9px 0 auto; }
.hscroll { width: 38%; display: flex; height: 12px; margin: 2px 15px 0 0; background: #dadada; }
.hscroll button { width: 12px; }
.hscroll .thumb { flex: 1; background: #fff; border: 1px solid #ababab; }
.hscroll .track { width: 20px; }

.status { flex: none; display: flex; align-items: center; height: 15px; padding: 0 6px; background: #f3f2f1; font-size: 8px; color: #605e5c; }
.ready { width: 36px; }
.acc { display: flex; align-items: center; gap: 1px; margin: 0 auto 0 10px; }
.view { width: 31px; height: 15px; display: flex; align-items: center; justify-content: center; }
.sel { background: #d2d0ce; }
.zb { width: 12px; font-size: 12px; }
.status input { appearance: none; width: 76px; height: 15px; background: linear-gradient(#999, #999) center / 100% 1px no-repeat; }
.status input::-webkit-slider-thumb { appearance: none; width: 4px; height: 9px; background: #444; }
.pct { width: 28px; text-align: right; }

.taskbar { flex: none; display: flex; height: 31px; background: linear-gradient(90deg, #22383f 0%, #22383f 50%, #1a2c49 72%, #14274b 100%); color: #fff; }
.t-start, .t-sys, .t-app { display: flex; align-items: center; justify-content: center; position: relative; }
.t-start { width: 36px; } .t-sys { width: 37px; } .t-app { width: 38px; }
.open::after { content: ""; position: absolute; left: 4px; right: 3px; bottom: 0; height: 2px; background: #76b9ed; }
.current { background: #4b5e66; }
.current::after { left: 0; right: 0; }
.tray { margin-left: auto; display: flex; align-items: center; padding-right: 15px; }
.temp { font-size: 11px; margin-left: 5px; width: 30px; }
.cond { width: 20px; font: 10px/14px "DejaVu Sans", sans-serif; }
.upi { margin: 0 8px 0 17px; }
.lang { width: 25px; }
.clock { width: 48px; display: flex; flex-direction: column; align-items: center; line-height: 14px; }
.note { position: relative; margin-left: 8px; }
.note b { position: absolute; left: 7px; top: 7px; width: 12px; height: 12px; border: 1px solid #999; border-radius: 6px; background: #30343c; font-size: 8px; line-height: 10px; text-align: center; }

.overlay { position: absolute; inset: 124px 0 auto; display: flex; justify-content: center; }
.dialog { width: 371px; background: #f0f0f0; border: 1px solid #7a7a7a; box-shadow: 0 3px 9px rgba(0, 0, 0, .4); color: #222; font-size: 8px; }
.dtitle { display: flex; align-items: center; height: 22px; padding-left: 5px; background: #fff; font-size: 9px; }
.dtitle span { flex: 1; }
.dtitle button { width: 35px; display: flex; justify-content: center; font-weight: 600; }
.dbody { position: relative; padding: 13px 4px 5px 4px; }
p { margin: 0; }
.dtabs { display: flex; align-items: flex-end; height: 22px; margin-top: 2px; margin-bottom: -1px; position: relative; }
.dtabs button { height: 12px; line-height: 11px; padding: 0 3px; background: #f0f0f0; border: 1px solid #dcdcdc; border-bottom: 0; }
.dtabs .active { height: 14px; background: #fff; }
.panel { height: 269px; padding: 8px 7px; background: #fff; border: 1px solid #dcdcdc; }
.showrow { display: flex; height: 18px; padding-left: 1px; }
.showrow label { width: 28px; }
.combo { display: flex; width: 143px; height: 16px; padding: 1px; border: 1px solid #b4b4b4; }
.combo select { flex: 1; appearance: none; background: #99c9ef; border: 1px solid #5b7f9f; line-height: 10px; }
.combo span { width: 14px; display: flex; align-items: center; justify-content: center; background: #e1e1e1; border: 1px solid #c4c4c4; }
.list { height: 234px; padding: 2px 1px; border: 1px solid #828790; }
.list h3 { display: flex; align-items: center; gap: 4px; margin: 0; font-size: 12px; line-height: 17px; font-weight: 400; white-space: nowrap; }
.list h3::after { content: ""; flex: 1; height: 1px; background: #dfe4ec; }
.list p { padding-left: 34px; margin-bottom: 4px; line-height: 12px; font-weight: 700; color: #000; }
.actions { display: flex; gap: 8px; margin-top: 12px; }
.actions button { width: 53px; height: 18px; line-height: 15px; background: #e5e5e5; border: 1px solid #b4b4b4; }
.actions .browse { width: 80px; margin-right: auto; }
.actions button:disabled { color: #9a9a9a; }
.grip { position: absolute; right: 1px; bottom: 1px; width: 7px; height: 7px; background: repeating-linear-gradient(90deg, #b4b4b4 0 1px, transparent 1px 3px); clip-path: polygon(100% 0, 100% 100%, 0 100%); }
</style>
